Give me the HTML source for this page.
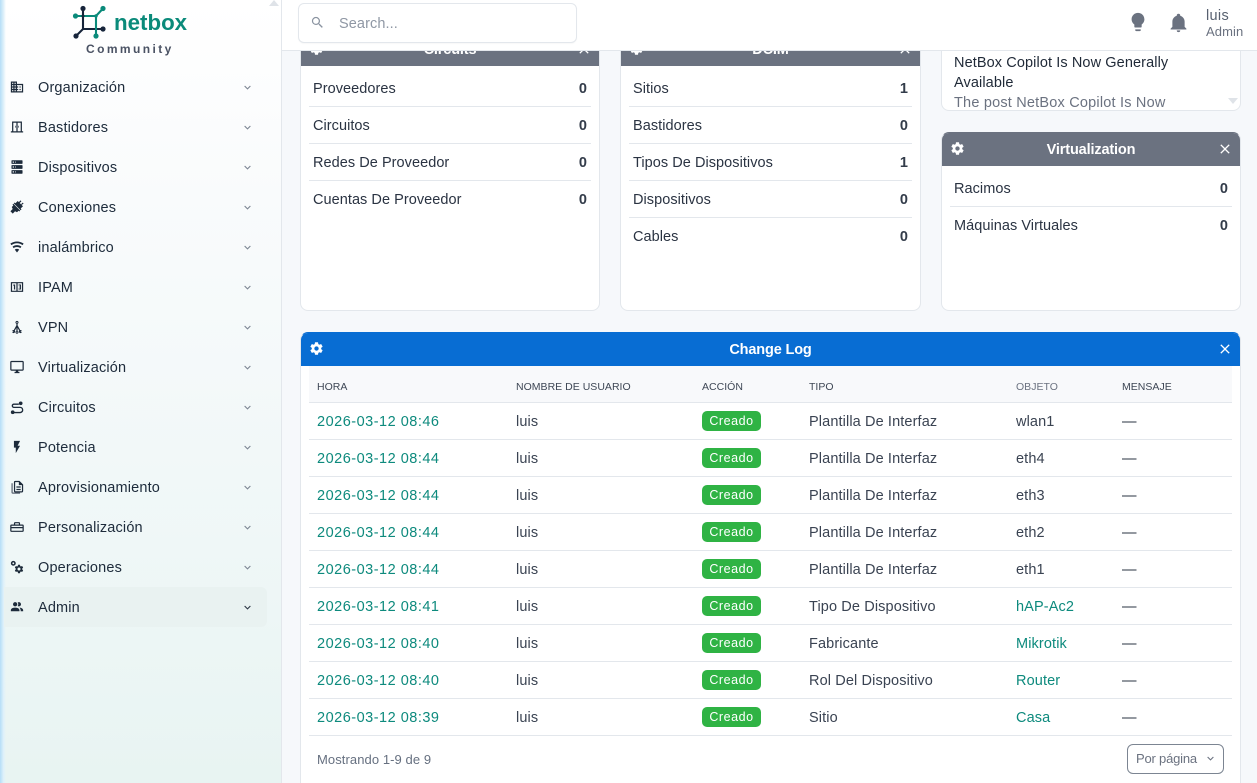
<!DOCTYPE html>
<html><head><meta charset="utf-8"><style>
*{box-sizing:border-box}
html,body{margin:0;padding:0;width:1257px;height:783px;overflow:hidden;background:#f6f8fb}
#w{position:relative;width:1257px;height:783px;overflow:hidden;background:#f6f8fb;font-family:"Liberation Sans",sans-serif;font-size:14.5px;color:#2a3342;letter-spacing:.1px}
.a,.t{position:absolute;white-space:nowrap}
.t{line-height:20px;height:20px}
#side{position:absolute;left:0;top:0;width:282px;height:783px;border-right:1px solid #e3e7ec;background:linear-gradient(180deg,#fff 0,#f9fbfc 25%,#eff7f7 70%,#e8f4f2 100%)}
#strip{position:absolute;left:0;top:0;width:6px;height:783px;background:linear-gradient(90deg,#b5def7,#dff1fa 60%,rgba(255,255,255,0))}
.n{position:absolute;left:38px;margin-top:1px;color:#1d2b3b;line-height:20px;letter-spacing:.16px}
.i{position:absolute;left:9px;width:18px;height:18px;fill:#1d2b3b;transform:translateX(-1px) scale(.82)}
.c{position:absolute;left:241px;width:13px;height:13px;fill:#7b8592}
#top{position:absolute;left:282px;top:0;width:975px;height:51px;background:#fff;border-bottom:1px solid #e3e7ec}
.card{position:absolute;background:#fff;border:1px solid #e3e7ec;border-radius:8px;overflow:hidden}
.h{position:absolute;left:-1px;right:-1px;background:#6b7280;color:#fff;font-weight:bold;text-align:center;height:34px;line-height:36px;letter-spacing:-.15px}
.r{position:absolute;left:8px;right:8px;height:37px;border-bottom:1px solid #e3e7ec;line-height:37px;letter-spacing:.05px}
.r b{position:absolute;right:4px;top:1px;font-weight:bold;color:#333c4a}
.r span{position:absolute;left:4px;top:1px}
.g{position:absolute;width:15px;height:15px;fill:#fff}
.x{position:absolute;width:16px;height:16px;fill:#fff}
.th{position:absolute;top:377px;font-size:10.5px;line-height:20px;color:#3e4755;letter-spacing:.02px}
.row{position:absolute;left:309px;width:923px;height:37px;border-bottom:1px solid #e3e7ec;background:#fff}
.row span{position:absolute;top:9px;line-height:20px;color:#3a4352;letter-spacing:.12px}
.row span:first-child{letter-spacing:.5px}
.row span:last-child{color:#2a3342}
.row .l{color:#0d8a7d}
.row .b{left:393px;top:8px;width:59px;height:20px;background:#2fb344;color:#fff;border-radius:5px;font-size:12.5px;line-height:20px;text-align:center;letter-spacing:.55px}
</style></head><body><div id="w">
<svg width="0" height="0" style="position:absolute"><defs>
<symbol id="gear" viewBox="0 0 24 24"><path d="M12,15.5A3.5,3.5 0 0,1 8.5,12A3.5,3.5 0 0,1 12,8.5A3.5,3.5 0 0,1 15.5,12A3.5,3.5 0 0,1 12,15.5M19.43,12.97C19.47,12.65 19.5,12.33 19.5,12C19.5,11.67 19.47,11.34 19.43,11L21.54,9.37C21.73,9.22 21.78,8.95 21.66,8.73L19.66,5.27C19.54,5.05 19.27,4.96 19.05,5.05L16.56,6.05C16.04,5.66 15.5,5.32 14.87,5.07L14.5,2.42C14.46,2.18 14.25,2 14,2H10C9.75,2 9.54,2.18 9.5,2.42L9.13,5.07C8.5,5.32 7.96,5.66 7.44,6.05L4.95,5.05C4.73,4.96 4.46,5.05 4.34,5.27L2.34,8.73C2.21,8.95 2.27,9.22 2.46,9.37L4.57,11C4.53,11.34 4.5,11.67 4.5,12C4.5,12.33 4.53,12.65 4.57,12.97L2.46,14.63C2.27,14.78 2.21,15.05 2.34,15.27L4.34,18.73C4.46,18.95 4.73,19.03 4.95,18.95L7.44,17.94C7.96,18.34 8.5,18.68 9.13,18.93L9.5,21.58C9.54,21.82 9.75,22 10,22H14C14.25,22 14.46,21.82 14.5,21.58L14.87,18.93C15.5,18.67 16.04,18.34 16.56,17.94L19.05,18.95C19.27,19.03 19.54,18.95 19.66,18.73L21.66,15.27C21.78,15.05 21.73,14.78 21.54,14.63L19.43,12.97Z"/></symbol>
<symbol id="close" viewBox="0 0 24 24"><path d="M19,6.41L17.59,5L12,10.59L6.41,5L5,6.41L10.59,12L5,17.59L6.41,19L12,13.41L17.59,19L19,17.59L13.41,12L19,6.41Z"/></symbol>
<symbol id="chev" viewBox="0 0 24 24"><path d="M7.41,8.58L12,13.17L16.59,8.58L18,10L12,16L6,10L7.41,8.58Z"/></symbol>
</defs></svg>
<div id="side"></div><div id="strip"></div>

<!-- logo -->
<svg class="a" style="left:70px;top:0" width="40" height="42" viewBox="70 0 40 42">
<path d="M83 8.5V29M76 36L83 29H103" fill="none" stroke="#16243a" stroke-width="2.1"/>
<path d="M75.5 16H96M96 16L103 8.5M96 16V36" fill="none" stroke="#0a8a7a" stroke-width="2.1"/>
<circle cx="83" cy="8.5" r="2.6" fill="#16243a"/><circle cx="103" cy="29" r="2.6" fill="#16243a"/><circle cx="76" cy="36" r="2.6" fill="#16243a"/>
<circle cx="75.5" cy="16" r="2.6" fill="#0a8a7a"/><circle cx="103" cy="8.5" r="2.6" fill="#0a8a7a"/><circle cx="96" cy="36" r="2.6" fill="#0a8a7a"/><circle cx="96" cy="16" r="1.7" fill="#0a8a7a"/><circle cx="83" cy="16" r="1.5" fill="#16243a"/>
</svg>
<div class="a" style="left:114px;top:8px;font-size:22.3px;line-height:30px;font-weight:bold;color:#0a8a7a;letter-spacing:0">netbox</div>
<div class="a" style="left:86px;top:42px;font-size:12px;line-height:15px;font-weight:bold;color:#4a5263;letter-spacing:2.42px">Community</div>
<div class="a" style="left:269px;top:0;width:0;height:0;border:5px solid transparent;border-top:0;border-bottom:6px solid #dfe3e8"></div>

<div class="a" style="left:4px;top:587px;width:263px;height:40px;background:#e9f2f1;border-radius:0 6px 6px 0"></div>

<!-- nav -->
<svg class="i" style="top:78px" viewBox="0 0 24 24"><path d="M18,15H16V17H18M18,11H16V13H18M20,19H12V17H14V15H12V13H14V11H12V9H20M10,7H8V5H10M10,11H8V9H10M10,15H8V13H10M10,19H8V17H10M6,7H4V5H6M6,11H4V9H6M6,15H4V13H6M6,19H4V17H6M12,7V3H2V21H22V7H12Z"/></svg>
<div class="n" style="top:77px">Organización</div>
<svg class="i" style="top:118px" viewBox="0 0 24 24" fill-rule="evenodd"><path d="M4 3H20V19H22V21H2V19H4V3M6 5V19H11V5H6M13 5V19H18V5H13M9 10H10V13H9V10M14 10H15V13H14V10Z"/></svg>
<div class="n" style="top:117px">Bastidores</div>
<svg class="i" style="top:158px" viewBox="0 0 24 24"><path d="M4,1H20A1,1 0 0,1 21,2V6A1,1 0 0,1 20,7H4A1,1 0 0,1 3,6V2A1,1 0 0,1 4,1M4,9H20A1,1 0 0,1 21,10V14A1,1 0 0,1 20,15H4A1,1 0 0,1 3,14V10A1,1 0 0,1 4,9M4,17H20A1,1 0 0,1 21,18V22A1,1 0 0,1 20,23H4A1,1 0 0,1 3,22V18A1,1 0 0,1 4,17M9,5H10V3H9V5M9,13H10V11H9V13M9,21H10V19H9V21M5,3V5H7V3H5M5,11V13H7V11H5M5,19V21H7V19H5Z"/></svg>
<div class="n" style="top:157px">Dispositivos</div>
<svg class="i" style="top:198px" viewBox="0 0 24 24"><path d="M21.4 7.5L22.7 6.2 21.3 4.8 18.5 7.6 16.4 5.5 19.2 2.7 17.8 1.3 15 4.1 13.2 2.3 9.5 6 8.2 4.7 6.8 6.1 17.9 17.2 19.3 15.8 18 14.5 21.7 10.8 19.2 8.3 21.4 7.5M6.1 6.8L4.7 8.2 6 9.5 3.5 12 5 15.2 1.3 18.9 5.1 22.7 8.8 19 12 20.5 14.5 18 15.8 19.3 17.2 17.9 6.1 6.8Z"/></svg>
<div class="n" style="top:197px">Conexiones</div>
<svg class="i" style="top:238px" viewBox="0 0 24 24"><path d="M12,21L15.6,16.2C14.6,15.45 13.35,15 12,15C10.65,15 9.4,15.45 8.4,16.2L12,21M12,3C7.95,3 4.21,4.34 1.2,6.6L3,9C5.5,7.12 8.62,6 12,6C15.38,6 18.5,7.12 21,9L22.8,6.6C19.79,4.34 16.05,3 12,3M12,9C9.3,9 6.81,9.89 4.8,11.4L6.6,13.8C8.1,12.67 9.97,12 12,12C14.03,12 15.9,12.67 17.4,13.8L19.2,11.4C17.19,9.89 14.7,9 12,9Z"/></svg>
<div class="n" style="top:237px">inalámbrico</div>
<svg class="i" style="top:278px" viewBox="0 0 24 24" fill-rule="evenodd"><path d="M2 4H22V20H2V4M4 6V18H11V6H4M13 6V18H20V6H13M6 8H9V16H7V10H6V8M14.5 8H18.5V16H14.5V14.5H17V12.7H15V11.3H17V9.5H14.5V8Z"/></svg>
<div class="n" style="top:277px">IPAM</div>
<svg class="i" style="top:318px" viewBox="0 0 24 24" fill-rule="evenodd"><path d="M12 2A2.5 2.5 0 0 1 13 6.8V9.3L17.3 17A2.5 2.5 0 1 1 15.6 18L13 13.4V18.2A2.5 2.5 0 1 1 11 18.2V13.4L8.4 18A2.5 2.5 0 1 1 6.7 17L11 9.3V6.8A2.5 2.5 0 0 1 12 2M12 3.6A.9.9 0 1 0 12 5.4.9.9 0 1 0 12 3.6M5 18.6A.9.9 0 1 0 5 20.4.9.9 0 1 0 5 18.6M12 19.6A.9.9 0 1 0 12 21.4.9.9 0 1 0 12 19.6M19 18.6A.9.9 0 1 0 19 20.4.9.9 0 1 0 19 18.6Z"/></svg>
<div class="n" style="top:317px">VPN</div>
<svg class="i" style="top:358px" viewBox="0 0 24 24"><path d="M21,16H3V4H21M21,2H3C1.89,2 1,2.89 1,4V16A2,2 0 0,0 3,18H10V20H8V22H16V20H14V18H21A2,2 0 0,0 23,16V4C23,2.89 22.1,2 21,2Z"/></svg>
<div class="n" style="top:357px">Virtualización</div>
<svg class="i" style="top:398px" viewBox="0 0 24 24"><path d="M6 21H17A4.2 4.2 0 0 0 17 12.6H7A2.6 2.6 0 0 1 7 7.4H15" fill="none" stroke="#1d2b3b" stroke-width="2.2"/><circle cx="18" cy="6" r="3"/><circle cx="5" cy="20.5" r="3"/></svg>
<div class="n" style="top:397px">Circuitos</div>
<svg class="i" style="top:438px" viewBox="0 0 24 24"><path d="M7,2V13H10V22L17,10H13L17,2H7Z"/></svg>
<div class="n" style="top:437px">Potencia</div>
<svg class="i" style="top:478px" viewBox="0 0 24 24" fill-rule="evenodd"><path d="M9 2H16L22 8V19A2 2 0 0 1 20 21H9A2 2 0 0 1 7 19V4A2 2 0 0 1 9 2M9 4V19H20V9H15V4H9M11 11H18V13H11V11M11 15H18V17H11V15Z"/><path d="M3 6H5V21H17V23H5A2 2 0 0 1 3 21Z" fill="#5a6472"/></svg>
<div class="n" style="top:477px">Aprovisionamiento</div>
<svg class="i" style="top:518px" viewBox="0 0 24 24" fill-rule="evenodd"><path d="M9 4H15A2 2 0 0 1 17 6V8H21A2 2 0 0 1 23 10V18A2 2 0 0 1 21 20H3A2 2 0 0 1 1 18V10A2 2 0 0 1 3 8H7V6A2 2 0 0 1 9 4M9 6V8H15V6H9M3 10V12H21V10H3M3 14V18H21V14H3Z"/></svg>
<div class="n" style="top:517px">Personalización</div>
<svg class="i" style="top:558px" viewBox="0 0 24 24" fill-rule="evenodd"><path d="M6 2A4 4 0 1 1 6 10 4 4 0 1 1 6 2M6 4.5A1.5 1.5 0 1 0 6 7.5 1.5 1.5 0 1 0 6 4.5Z"/><svg x="7" y="7" width="16.5" height="16.5"><use href="#gear"/></svg></svg>
<div class="n" style="top:557px">Operaciones</div>
<svg class="i" style="top:598px" viewBox="0 0 24 24"><path d="M16 17V19H2V17S2 13 9 13 16 17 16 17M12.5 7.5A3.5 3.5 0 1 0 9 11A3.5 3.5 0 0 0 12.5 7.5M15.94 13A5.32 5.32 0 0 1 18 17V19H22V17S22 13.37 15.94 13M15 4A3.39 3.39 0 0 0 13.07 4.59A5 5 0 0 1 13.07 10.41A3.39 3.39 0 0 0 15 11A3.5 3.5 0 0 0 15 4Z"/></svg>
<div class="n" style="top:597px">Admin</div>

<svg class="c" style="top:81px"><use href="#chev"/></svg>
<svg class="c" style="top:121px"><use href="#chev"/></svg>
<svg class="c" style="top:161px"><use href="#chev"/></svg>
<svg class="c" style="top:201px"><use href="#chev"/></svg>
<svg class="c" style="top:241px"><use href="#chev"/></svg>
<svg class="c" style="top:281px"><use href="#chev"/></svg>
<svg class="c" style="top:321px"><use href="#chev"/></svg>
<svg class="c" style="top:361px"><use href="#chev"/></svg>
<svg class="c" style="top:401px"><use href="#chev"/></svg>
<svg class="c" style="top:441px"><use href="#chev"/></svg>
<svg class="c" style="top:481px"><use href="#chev"/></svg>
<svg class="c" style="top:521px"><use href="#chev"/></svg>
<svg class="c" style="top:561px"><use href="#chev"/></svg>
<svg class="c" style="top:601px;fill:#2b3644"><use href="#chev"/></svg>

<!-- cards (behind the navbar) -->
<div class="card" style="left:300px;top:20px;width:300px;height:291px">
  <div class="h" style="top:11px;left:0;right:0">Circuits</div>
  <svg class="g" style="left:8px;top:20px"><use href="#gear"/></svg>
  <svg class="x" style="left:275px;top:20px"><use href="#close"/></svg>
  <div class="r" style="top:49px"><span>Proveedores</span><b>0</b></div>
  <div class="r" style="top:86px"><span>Circuitos</span><b>0</b></div>
  <div class="r" style="top:123px"><span>Redes De Proveedor</span><b>0</b></div>
  <div class="r" style="top:160px;border:0"><span>Cuentas De Proveedor</span><b>0</b></div>
</div>
<div class="card" style="left:620px;top:20px;width:301px;height:291px">
  <div class="h" style="top:11px;left:0;right:0">DCIM</div>
  <svg class="g" style="left:8px;top:20px"><use href="#gear"/></svg>
  <svg class="x" style="left:276px;top:20px"><use href="#close"/></svg>
  <div class="r" style="top:49px"><span>Sitios</span><b>1</b></div>
  <div class="r" style="top:86px"><span>Bastidores</span><b>0</b></div>
  <div class="r" style="top:123px"><span>Tipos De Dispositivos</span><b>1</b></div>
  <div class="r" style="top:160px"><span>Dispositivos</span><b>0</b></div>
  <div class="r" style="top:197px;border:0"><span>Cables</span><b>0</b></div>
</div>
<div class="card" style="left:941px;top:20px;width:300px;height:91px">
  <div class="t" style="left:12px;top:32px;color:#1f2937">NetBox Copilot Is Now Generally</div>
  <div class="t" style="left:12px;top:52px;color:#1f2937">Available</div>
  <div class="t" style="left:12px;top:72px;color:#6b7280;letter-spacing:.2px">The post NetBox Copilot Is Now</div>
  <div class="a" style="left:286px;top:77px;width:0;height:0;border:5px solid transparent;border-bottom:0;border-top:6px solid #dfe3e8"></div>
</div>
<div class="card" style="left:941px;top:132px;width:300px;height:179px;border-top-color:#6b7280">
  <div class="h" style="top:-1px;left:0;right:0">Virtualization</div>
  <svg class="g" style="left:7.5px;top:7.5px"><use href="#gear"/></svg>
  <svg class="x" style="left:275px;top:8px"><use href="#close"/></svg>
  <div class="r" style="top:37px"><span>Racimos</span><b>0</b></div>
  <div class="r" style="top:74px;border:0"><span>Máquinas Virtuales</span><b>0</b></div>
</div>

<!-- change log -->
<div class="card" style="left:300px;top:332px;width:941px;height:470px;border-top-color:#086dd3">
  <div class="h" style="top:-1px;left:0;right:0;background:#086dd3">Change Log</div>
  <svg class="g" style="left:7.5px;top:8px"><use href="#gear"/></svg>
  <svg class="x" style="left:916px;top:8px"><use href="#close"/></svg>
</div>
<div class="a" style="left:309px;top:366px;width:923px;height:37px;background:#f8f9fb;border-bottom:1px solid #e3e7ec"></div>
<div class="th" style="left:317px">HORA</div>
<div class="th" style="left:516px">NOMBRE DE USUARIO</div>
<div class="th" style="left:702px">ACCIÓN</div>
<div class="th" style="left:809px">TIPO</div>
<div class="th" style="left:1016px;color:#6b7280">OBJETO</div>
<div class="th" style="left:1122px">MENSAJE</div>

<div class="row" style="top:403px"><span class="l" style="left:8px">2026-03-12 08:46</span><span style="left:207px">luis</span><span class="b">Creado</span><span style="left:500px">Plantilla De Interfaz</span><span style="left:707px">wlan1</span><span style="left:813px">—</span></div>
<div class="row" style="top:440px"><span class="l" style="left:8px">2026-03-12 08:44</span><span style="left:207px">luis</span><span class="b">Creado</span><span style="left:500px">Plantilla De Interfaz</span><span style="left:707px">eth4</span><span style="left:813px">—</span></div>
<div class="row" style="top:477px"><span class="l" style="left:8px">2026-03-12 08:44</span><span style="left:207px">luis</span><span class="b">Creado</span><span style="left:500px">Plantilla De Interfaz</span><span style="left:707px">eth3</span><span style="left:813px">—</span></div>
<div class="row" style="top:514px"><span class="l" style="left:8px">2026-03-12 08:44</span><span style="left:207px">luis</span><span class="b">Creado</span><span style="left:500px">Plantilla De Interfaz</span><span style="left:707px">eth2</span><span style="left:813px">—</span></div>
<div class="row" style="top:551px"><span class="l" style="left:8px">2026-03-12 08:44</span><span style="left:207px">luis</span><span class="b">Creado</span><span style="left:500px">Plantilla De Interfaz</span><span style="left:707px">eth1</span><span style="left:813px">—</span></div>
<div class="row" style="top:588px"><span class="l" style="left:8px">2026-03-12 08:41</span><span style="left:207px">luis</span><span class="b">Creado</span><span style="left:500px">Tipo De Dispositivo</span><span class="l" style="left:707px">hAP-Ac2</span><span style="left:813px">—</span></div>
<div class="row" style="top:625px"><span class="l" style="left:8px">2026-03-12 08:40</span><span style="left:207px">luis</span><span class="b">Creado</span><span style="left:500px">Fabricante</span><span class="l" style="left:707px">Mikrotik</span><span style="left:813px">—</span></div>
<div class="row" style="top:662px"><span class="l" style="left:8px">2026-03-12 08:40</span><span style="left:207px">luis</span><span class="b">Creado</span><span style="left:500px">Rol Del Dispositivo</span><span class="l" style="left:707px">Router</span><span style="left:813px">—</span></div>
<div class="row" style="top:699px"><span class="l" style="left:8px">2026-03-12 08:39</span><span style="left:207px">luis</span><span class="b">Creado</span><span style="left:500px">Sitio</span><span class="l" style="left:707px">Casa</span><span style="left:813px">—</span></div>

<div class="t" style="left:317px;top:750px;font-size:13px;color:#667080;letter-spacing:.08px">Mostrando 1-9 de 9</div>
<div class="a" style="left:1127px;top:744px;width:97px;height:30px;border:1px solid #7c8592;border-radius:6px;background:#fff;font-size:13px;line-height:28px;padding-left:8px;color:#6b7280;letter-spacing:-.2px">Por página
<svg class="a" style="left:76px;top:7px;fill:#6b7280" width="13" height="13"><use href="#chev"/></svg></div>

<!-- navbar -->
<div id="top"></div>
<div class="a" style="left:298px;top:3px;width:279px;height:40px;background:#fff;border:1px solid #e3e7ec;border-radius:6px;box-shadow:0 1px 1px rgba(0,0,0,.03)"></div>
<svg class="a" style="left:310px;top:15px" width="15" height="15" viewBox="0 0 24 24" fill="#8a93a0"><path d="M9.5,3A6.5,6.5 0 0,1 16,9.5C16,11.11 15.41,12.59 14.44,13.73L14.71,14H15.5L20.5,19L19,20.5L14,15.5V14.71L13.73,14.44C12.59,15.41 11.11,16 9.5,16A6.5,6.5 0 0,1 3,9.5A6.5,6.5 0 0,1 9.5,3M9.5,5C7,5 5,7 5,9.5C5,12 7,14 9.5,14C12,14 14,12 14,9.5C14,7 12,5 9.5,5Z"/></svg>
<div class="t" style="left:339px;top:14px;color:#8f97a4">Search...</div>
<svg class="a" style="left:1127px;top:11px" width="22" height="22" viewBox="0 0 24 24" fill="#6b7280"><path d="M12,2A7,7 0 0,0 5,9C5,11.38 6.19,13.47 8,14.74V17A1,1 0 0,0 9,18H15A1,1 0 0,0 16,17V14.74C17.81,13.47 19,11.38 19,9A7,7 0 0,0 12,2M9,21A1,1 0 0,0 10,22H14A1,1 0 0,0 15,21V20H9V21Z"/></svg>
<svg class="a" style="left:1167.5px;top:12px" width="21" height="21" viewBox="0 0 24 24" fill="#6b7280"><path d="M21,19V20H3V19L5,17V11C5,7.9 7.03,5.17 10,4.29C10,4.19 10,4.1 10,4A2,2 0 0,1 12,2A2,2 0 0,1 14,4C14,4.1 14,4.19 14,4.29C16.97,5.17 19,7.9 19,11V17L21,19M14,21A2,2 0 0,1 12,23A2,2 0 0,1 10,21"/></svg>
<div class="t" style="left:1206px;top:6px;color:#586170;letter-spacing:.32px">luis</div>
<div class="t" style="left:1206px;top:22px;font-size:13px;color:#6b7280">Admin</div>
</div></body></html>
